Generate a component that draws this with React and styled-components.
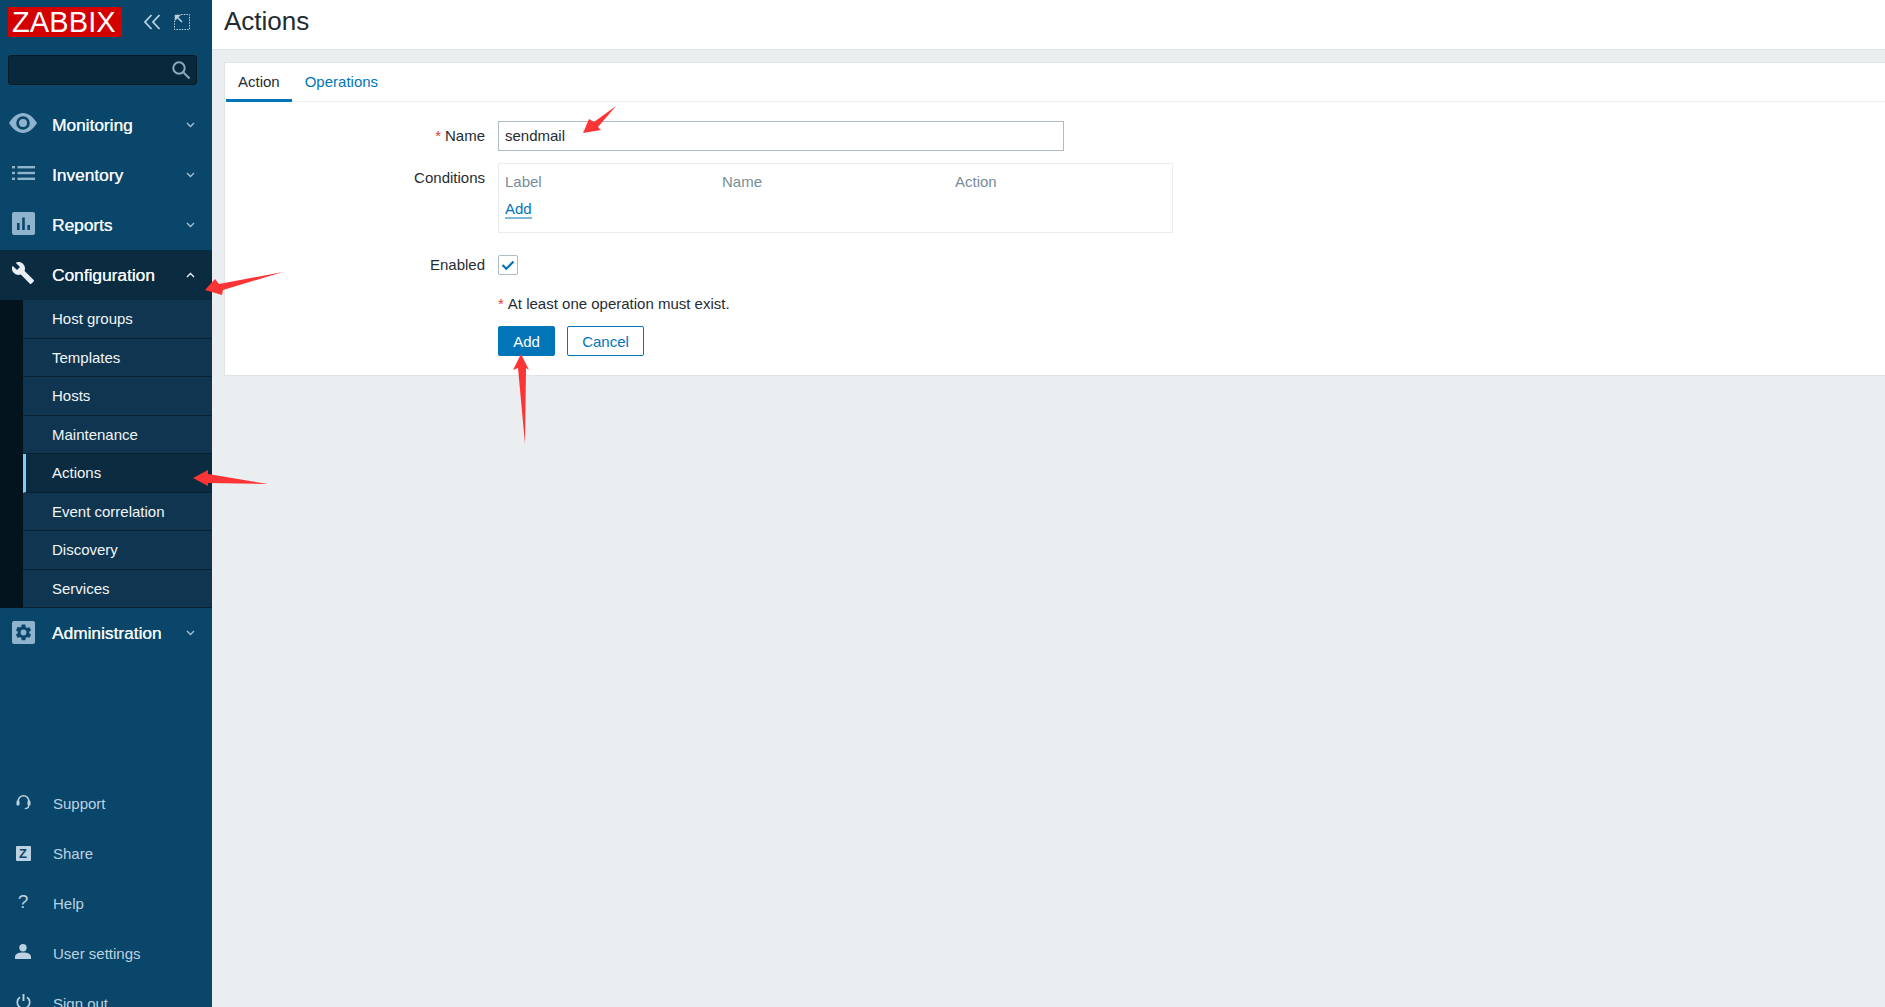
import React from "react";
import styled, { createGlobalStyle } from "styled-components";

const Global = createGlobalStyle`
  html, body { margin: 0; padding: 0; height: 100%; overflow: hidden; }
  body { font-family: "Liberation Sans", Arial, sans-serif; background: #ebeef0; color: #1f2c33; }
  #root { height: 100%; }
  * { box-sizing: border-box; }
`;

const Page = styled.div`
  position: relative;
  display: flex;
  height: 1007px;
  overflow: hidden;
`;
const Sidebar = styled.aside`
  flex: 0 0 212px;
  width: 212px;
  height: 1007px;
  overflow: hidden;
  background: #0a466a;
  display: flex;
  flex-direction: column;
  & > * { flex: none; }
`;
const Brand = styled.div`
  display: flex;
  align-items: center;
  height: 30px;
  margin: 7px 0 18px 8px;
`;
const Logo = styled.div`
  width: 114px;
  height: 30px;
  background: #d40000;
  color: #fff;
  font-size: 29px;
  line-height: 31px;
  padding-left: 4px;
  letter-spacing: 0.1px;
  font-weight: 400;
`;
const BrandIcon = styled.svg`
  display: block;
  margin-left: ${(p) => p.$ml}px;
`;
const Search = styled.div`
  width: 189px;
  height: 30px;
  margin-left: 8px;
  background: #08293c;
  border: 1px solid #061a26;
  border-radius: 3px;
  display: flex;
  align-items: center;
  justify-content: flex-end;
  padding-right: 5px;
`;
const MainMenu = styled.nav`
  margin-top: 15px;
  display: flex;
  flex-direction: column;
  & > * { flex: none; }
`;
const MenuItem = styled.div`
  height: 50px;
  display: flex;
  align-items: center;
  color: #f2f6f8;
  background: ${(p) => (p.$open ? "#0b2b41" : "transparent")};
  font-size: 17.3px;
  font-weight: 400;
  text-shadow: 0.2px 0 0 currentColor;
`;
const IconSlot = styled.span`
  flex: 0 0 46px;
  width: 46px;
  margin-right: 6px;
  display: flex;
  align-items: center;
  justify-content: center;
`;
const MenuLabel = styled.span`
  flex: 1;
`;
const Chevron = styled.svg`
  margin-right: 17px;
  display: block;
`;
const SubList = styled.div`
  background: #03141e;
  padding-left: 23px;
`;
const SubItem = styled.div`
  height: 38.5px;
  display: flex;
  align-items: center;
  padding-left: ${(p) => (p.$active ? 26 : 29)}px;
  background: ${(p) => (p.$active ? "#0b2b41" : "#0f3550")};
  border-left: ${(p) => (p.$active ? "3px solid #7fcbf2" : "0")};
  border-bottom: 1px solid #0a2131;
  color: #f2f6f8;
  font-size: 15px;
`;
const BottomMenu = styled.nav`
  margin-top: 120px;
  display: flex;
  flex-direction: column;
`;
const BottomItem = styled.div`
  flex: none;
  height: 50px;
  display: flex;
  align-items: center;
  color: #bcd2e0;
  font-size: 15px;
`;
const BottomLabel = styled.span`
  padding-left: 1px;
`;
const HelpMark = styled.span`
  color: #bcd2e0;
  font-size: 19px;
  line-height: 1;
  position: relative;
  top: -2px;
`;
const ZBadge = styled.span`
  width: 15px;
  height: 15px;
  background: #bcd2e0;
  border-radius: 1px;
  color: #0a466a;
  font-size: 13px;
  font-weight: 700;
  line-height: 15px;
  text-align: center;
`;
const Main = styled.main`
  flex: 1;
  min-width: 0;
  display: flex;
  flex-direction: column;
`;
const Header = styled.header`
  height: 50px;
  background: #fff;
  border-bottom: 1px solid #dfe4e7;
  padding-left: 12px;
  display: flex;
  align-items: flex-start;
`;
const Title = styled.h1`
  margin: 4px 0 0;
  font-size: 26px;
  line-height: 34px;
  font-weight: 400;
  color: #1f2c33;
`;
const Card = styled.section`
  margin: 12px 0 0 12px;
  height: 314px;
  background: #fff;
  border: 1px solid #dfe4e7;
  border-right: 0;
`;
const Tabs = styled.div`
  display: flex;
  gap: 1px;
  height: 39px;
  padding-left: 1px;
  border-bottom: 1px solid #ebeef0;
`;
const Tab = styled.div`
  height: 39px;
  padding: 0 12px;
  line-height: 38px;
  font-size: 15px;
  color: ${(p) => (p.$active ? "#1f2c33" : "#0275b8")};
  border-bottom: 3px solid ${(p) => (p.$active ? "#0275b8" : "transparent")};
`;
const Form = styled.div`
  padding-top: 19px;
  display: flex;
  flex-direction: column;
`;
const Row = styled.div`
  display: grid;
  grid-template-columns: 260px 1fr;
  column-gap: 13px;
  margin-top: ${(p) => p.$mt || 0}px;
  align-items: ${(p) => p.$align || "center"};
`;
const Label = styled.label`
  text-align: right;
  font-size: 15px;
  color: #1f2c33;
  padding-top: ${(p) => p.$pt || 0}px;
  padding-bottom: ${(p) => p.$pb || 0}px;
`;
const Star = styled.span`
  color: #e33734;
  margin-right: 4px;
`;
const Input = styled.div`
  width: 566px;
  height: 30px;
  border: 1px solid #acbbc4;
  padding-left: 6px;
  font-size: 15px;
  line-height: 28px;
  color: #1f2c33;
`;
const Conditions = styled.div`
  width: 675px;
  height: 70px;
  border: 1px solid #ebeef0;
  padding: 9px 6px;
`;
const CondHead = styled.div`
  display: grid;
  grid-template-columns: 217px 233px 1fr;
  font-size: 15px;
  line-height: 17px;
  color: #768d99;
`;
const LinkAdd = styled.span`
  display: inline-block;
  margin-top: 10px;
  font-size: 15px;
  line-height: 17px;
  color: #0275b8;
  border-bottom: 2px solid #7fb8d9;
`;
const Check = styled.div`
  width: 20px;
  height: 20px;
  border: 1px solid #acbbc4;
  border-radius: 2px;
  display: flex;
  align-items: center;
  justify-content: center;
`;
const Note = styled.div`
  font-size: 15px;
  line-height: 17px;
`;
const Buttons = styled.div`
  display: flex;
  gap: 12px;
`;
const Button = styled.div`
  width: ${(p) => p.$w}px;
  height: 30px;
  border-radius: 2px;
  border: 1px solid #0275b8;
  background: ${(p) => (p.$primary ? "#0275b8" : "#fff")};
  color: ${(p) => (p.$primary ? "#fff" : "#0275b8")};
  font-size: 15px;
  line-height: 29px;
  text-align: center;
`;
const Arrows = styled.svg`
  position: absolute;
  left: 0;
  top: 0;
  pointer-events: none;
`;

const ICON = "#8fb3cc";
const PALE = "#bcd2e0";

const Down = () => (
  <Chevron width="9" height="6" viewBox="0 0 9 6" fill="none" stroke="#a9c3d4" strokeWidth="1.3">
    <path d="M1 1l3.5 3.5L8 1" />
  </Chevron>
);
const Up = () => (
  <Chevron width="9" height="6" viewBox="0 0 9 6" fill="none" stroke="#f2f6f8" strokeWidth="1.3">
    <path d="M1 5l3.5-3.5L8 5" />
  </Chevron>
);
const EyeIcon = () => (
  <svg width="28" height="20" viewBox="0 0 28 20" style={{ marginTop: -5 }}>
    <path fill={ICON} fillRule="evenodd" d="M0 10C4 3.5 9 0 14 0s10 3.5 14 10c-4 6.5-9 10-14 10S4 16.5 0 10ZM14 3.2a6.8 6.8 0 1 0 0 13.600 6.8 6.8 0 0 0 0-13.600Z" />
    <circle cx="14" cy="10" r="4" fill={ICON} />
  </svg>
);
const ListIcon = () => (
  <svg width="23" height="14" viewBox="0 0 23 14" fill={ICON} style={{ marginTop: -5 }}>
    <rect x="0" y="0" width="3" height="2.4" />
    <rect x="0" y="5.8" width="3" height="2.4" />
    <rect x="0" y="11.6" width="3" height="2.4" />
    <rect x="5.5" y="0" width="17.5" height="2.4" />
    <rect x="5.5" y="5.8" width="17.5" height="2.4" />
    <rect x="5.5" y="11.6" width="17.5" height="2.4" />
  </svg>
);
const ReportsIcon = () => (
  <svg width="23" height="23" viewBox="0 0 23 23" style={{ marginTop: -4 }}>
    <rect width="23" height="23" rx="2" fill={ICON} />
    <rect x="5" y="11" width="2.6" height="7" fill="#0a466a" />
    <rect x="10.2" y="5.5" width="2.6" height="12.5" fill="#0a466a" />
    <rect x="15.4" y="13" width="2.6" height="5" fill="#0a466a" />
  </svg>
);
const WrenchIcon = () => (
  <svg width="24" height="24" viewBox="0 0 24 24" style={{ marginTop: -4 }}>
    <path fill="#e8eff4" d="M22.7 19l-9.1-9.1c.9-2.3.4-5-1.5-6.9-2-2-5-2.4-7.4-1.3L9 6 6 9 1.6 4.7C.4 7.1.9 10.1 2.9 12.1c1.9 1.9 4.6 2.4 6.9 1.5l9.1 9.1c.4.4 1 .4 1.4 0l2.3-2.3c.5-.4.5-1.1.1-1.4z" />
  </svg>
);
const GearIcon = () => (
  <svg width="23" height="23" viewBox="0 0 23 23" style={{ marginTop: -2 }}>
    <rect width="23" height="23" rx="2" fill={ICON} />
    <g transform="translate(1.9 1.9) scale(0.8)">
      <path fill="#0a466a" d="M19.14 12.94c.04-.3.06-.61.06-.94 0-.32-.02-.64-.07-.94l2.03-1.58a.49.49 0 0 0 .12-.61l-1.92-3.32a.49.49 0 0 0-.59-.22l-2.39.96a7 7 0 0 0-1.62-.94l-.36-2.54A.48.48 0 0 0 13.92 2h-3.84a.47.47 0 0 0-.47.41l-.36 2.54c-.59.24-1.13.57-1.62.94l-2.39-.96a.49.49 0 0 0-.59.22L2.74 8.87a.47.47 0 0 0 .12.61l2.03 1.58c-.05.3-.09.63-.09.94s.02.64.07.94l-2.03 1.58a.49.49 0 0 0-.12.61l1.92 3.32c.12.22.37.29.59.22l2.39-.96c.5.38 1.03.7 1.62.94l.36 2.54c.05.24.24.41.48.41h3.84c.24 0 .44-.17.47-.41l.36-2.54c.59-.24 1.13-.56 1.62-.94l2.39.96c.22.08.47 0 .59-.22l1.92-3.32a.47.47 0 0 0-.12-.61l-2.01-1.58zM12 15.6A3.6 3.6 0 1 1 12 8.4a3.6 3.6 0 0 1 0 7.2z" />
    </g>
  </svg>
);
const HeadsetIcon = () => (
  <svg width="15" height="16" viewBox="0 0 15 16" fill="none" style={{ marginTop: -3 }}>
    <path d="M2.2 9V7a5.3 5.3 0 0 1 10.6 0v2" stroke={PALE} strokeWidth="1.6" />
    <rect x="0.5" y="6.5" width="3" height="5" rx="1.2" fill={PALE} />
    <rect x="11.5" y="6.5" width="3" height="5" rx="1.2" fill={PALE} />
    <path d="M12.8 11c0 2.4-1.6 3.6-4 3.6" stroke={PALE} strokeWidth="1.4" />
  </svg>
);
const UserIcon = () => (
  <svg width="16" height="15" viewBox="0 0 16 15" fill={PALE} style={{ marginTop: -3 }}>
    <circle cx="8" cy="3.7" r="3.7" />
    <path d="M0 15v-2.2C0 10 3.5 8.5 8 8.5s8 1.5 8 4.3V15Z" />
  </svg>
);
const PowerIcon = () => (
  <svg width="15" height="16" viewBox="0 0 15 16" fill="none" stroke={PALE} style={{ marginTop: -3 }}>
    <path d="M4 3.2a6.2 6.2 0 1 0 7 0" strokeWidth="1.7" />
    <path d="M7.5 0v7" strokeWidth="1.9" />
  </svg>
);

const top = [
  ["Monitoring", <EyeIcon />],
  ["Inventory", <ListIcon />],
  ["Reports", <ReportsIcon />],
];
const subs = ["Host groups", "Templates", "Hosts", "Maintenance", "Actions", "Event correlation", "Discovery", "Services"];
const bottom = [
  ["Support", <HeadsetIcon />],
  ["Share", <ZBadge>Z</ZBadge>],
  ["Help", <HelpMark>?</HelpMark>],
  ["User settings", <UserIcon />],
  ["Sign out", <PowerIcon />],
];

export default function App() {
  return (
    <Page>
      <Global />
      <Sidebar>
        <Brand>
          <Logo>ZABBIX</Logo>
          <BrandIcon $ml={21} width="18" height="16" viewBox="0 0 18 16" fill="none" stroke="#bcd2e0" strokeWidth="1.8">
            <path d="M8.500 1L2 8l6.500 7M16.500 1L10 8l6.500 7" />
          </BrandIcon>
          <BrandIcon $ml={13} width="16" height="16" viewBox="0 0 16 16" fill="none" stroke="#bcd2e0">
            <path d="M7 .5h8.500V15.500H.5V7" strokeWidth="1" strokeDasharray="1.500 1.200" />
            <path d="M1 1h5.500L1 6.500Z" fill="#bcd2e0" strokeWidth="0.5" />
            <path d="M3 3l5 5" strokeWidth="1.600" />
          </BrandIcon>
        </Brand>
        <Search>
          <svg width="20" height="20" viewBox="0 0 20 20" fill="none" stroke="#8fa9ba" strokeWidth="2">
            <circle cx="8" cy="8" r="5.700" />
            <path d="M12.500 12.500L18.500 18.500" />
          </svg>
        </Search>
        <MainMenu>
          {top.map(([t, i]) => (
            <MenuItem key={t}>
              <IconSlot>{i}</IconSlot>
              <MenuLabel>{t}</MenuLabel>
              <Down />
            </MenuItem>
          ))}
          <MenuItem $open>
            <IconSlot><WrenchIcon /></IconSlot>
            <MenuLabel>Configuration</MenuLabel>
            <Up />
          </MenuItem>
          <SubList>
            {subs.map((s) => (
              <SubItem key={s} $active={s === "Actions"}>{s}</SubItem>
            ))}
          </SubList>
          <MenuItem>
            <IconSlot><GearIcon /></IconSlot>
            <MenuLabel>Administration</MenuLabel>
            <Down />
          </MenuItem>
        </MainMenu>
        <BottomMenu>
          {bottom.map(([t, i]) => (
            <BottomItem key={t}>
              <IconSlot>{i}</IconSlot>
              <BottomLabel>{t}</BottomLabel>
            </BottomItem>
          ))}
        </BottomMenu>
      </Sidebar>
      <Main>
        <Header>
          <Title>Actions</Title>
        </Header>
        <Card>
          <Tabs>
            <Tab $active>Action</Tab>
            <Tab>Operations</Tab>
          </Tabs>
          <Form>
            <Row>
              <Label $pb={1}><Star>*</Star>Name</Label>
              <Input>sendmail</Input>
            </Row>
            <Row $mt={12} $align="start">
              <Label $pt={6}>Conditions</Label>
              <Conditions>
                <CondHead>
                  <span>Label</span>
                  <span>Name</span>
                  <span>Action</span>
                </CondHead>
                <LinkAdd>Add</LinkAdd>
              </Conditions>
            </Row>
            <Row $mt={22}>
              <Label $pb={2}>Enabled</Label>
              <Check>
                <svg width="14" height="11" viewBox="0 0 14 11" fill="none" stroke="#0275b8" strokeWidth="2.200">
                  <path d="M1.500 5l3.800 3.800L12.500 1.500" />
                </svg>
              </Check>
            </Row>
            <Row $mt={20}>
              <span />
              <Note><Star>*</Star>At least one operation must exist.</Note>
            </Row>
            <Row $mt={14}>
              <span />
              <Buttons>
                <Button $primary $w={57}>Add</Button>
                <Button $w={77}>Cancel</Button>
              </Buttons>
            </Row>
          </Form>
        </Card>
      </Main>
      <Arrows width="1885" height="1007" viewBox="0 0 1885 1007" fill="#fb3535">
        <polygon points="583,133 589,119 594,122 616,106 598,127 601,130" />
        <polygon points="205,290 215,279 219,284 283,272 223,290 222,295" />
        <polygon points="193,478 208,470 208,474 268,484 208,483 208,486" />
        <polygon points="521,354 529,370 526,368 525,444 518,368 513,370" />
      </Arrows>
    </Page>
  );
}
